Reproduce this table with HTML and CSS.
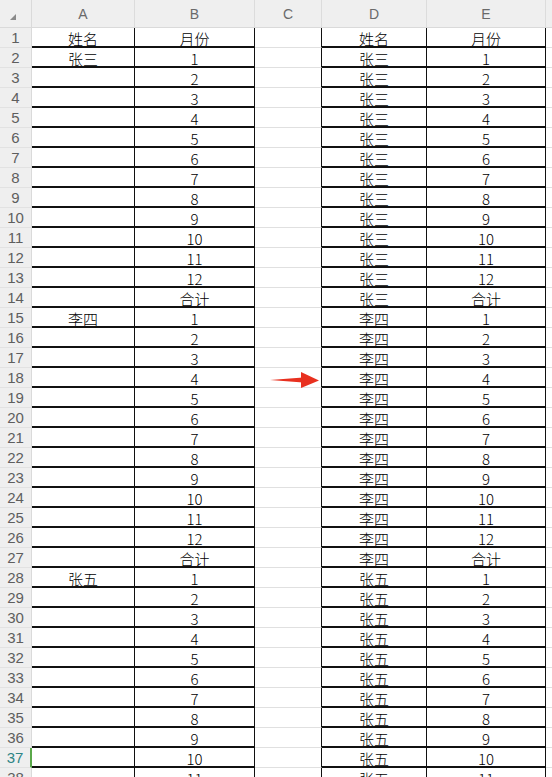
FILE: index.html
```html
<!DOCTYPE html>
<html lang="zh">
<head>
<meta charset="utf-8">
<link rel="stylesheet" href="styles.css">
</head>
<body>
<div class="sheet">
<div class="corner"><span class="tri"></span></div><div class="h">A</div><div class="h">B</div><div class="h">C</div><div class="h">D</div><div class="h">E</div><div class="h last"></div>
<div class="n">1</div><div class="t">姓名</div><div class="t">月份</div><div class="k"></div><div class="t">姓名</div><div class="t">月份</div><div class="g"></div>
<div class="n">2</div><div class="t">张三</div><div class="t">1</div><div class="k"></div><div class="t">张三</div><div class="t">1</div><div class="g"></div>
<div class="n">3</div><div class="t"></div><div class="t">2</div><div class="k"></div><div class="t">张三</div><div class="t">2</div><div class="g"></div>
<div class="n">4</div><div class="t"></div><div class="t">3</div><div class="k"></div><div class="t">张三</div><div class="t">3</div><div class="g"></div>
<div class="n">5</div><div class="t"></div><div class="t">4</div><div class="k"></div><div class="t">张三</div><div class="t">4</div><div class="g"></div>
<div class="n">6</div><div class="t"></div><div class="t">5</div><div class="k"></div><div class="t">张三</div><div class="t">5</div><div class="g"></div>
<div class="n">7</div><div class="t"></div><div class="t">6</div><div class="k"></div><div class="t">张三</div><div class="t">6</div><div class="g"></div>
<div class="n">8</div><div class="t"></div><div class="t">7</div><div class="k"></div><div class="t">张三</div><div class="t">7</div><div class="g"></div>
<div class="n">9</div><div class="t"></div><div class="t">8</div><div class="k"></div><div class="t">张三</div><div class="t">8</div><div class="g"></div>
<div class="n">10</div><div class="t"></div><div class="t">9</div><div class="k"></div><div class="t">张三</div><div class="t">9</div><div class="g"></div>
<div class="n">11</div><div class="t"></div><div class="t">10</div><div class="k"></div><div class="t">张三</div><div class="t">10</div><div class="g"></div>
<div class="n">12</div><div class="t"></div><div class="t">11</div><div class="k"></div><div class="t">张三</div><div class="t">11</div><div class="g"></div>
<div class="n">13</div><div class="t"></div><div class="t">12</div><div class="k"></div><div class="t">张三</div><div class="t">12</div><div class="g"></div>
<div class="n">14</div><div class="t"></div><div class="t">合计</div><div class="k"></div><div class="t">张三</div><div class="t">合计</div><div class="g"></div>
<div class="n">15</div><div class="t">李四</div><div class="t">1</div><div class="k"></div><div class="t">李四</div><div class="t">1</div><div class="g"></div>
<div class="n">16</div><div class="t"></div><div class="t">2</div><div class="k"></div><div class="t">李四</div><div class="t">2</div><div class="g"></div>
<div class="n">17</div><div class="t"></div><div class="t">3</div><div class="k"></div><div class="t">李四</div><div class="t">3</div><div class="g"></div>
<div class="n">18</div><div class="t"></div><div class="t">4</div><div class="k arrow-cell"><svg class="arrow" width="67" height="20" viewBox="0 0 67 20"><polygon points="15,12 48,9.6 48,14.4" fill="#e8301f"/><polygon points="46,4 64,12.5 46,20" fill="#e8301f"/></svg></div><div class="t">李四</div><div class="t">4</div><div class="g"></div>
<div class="n">19</div><div class="t"></div><div class="t">5</div><div class="k"></div><div class="t">李四</div><div class="t">5</div><div class="g"></div>
<div class="n">20</div><div class="t"></div><div class="t">6</div><div class="k"></div><div class="t">李四</div><div class="t">6</div><div class="g"></div>
<div class="n">21</div><div class="t"></div><div class="t">7</div><div class="k"></div><div class="t">李四</div><div class="t">7</div><div class="g"></div>
<div class="n">22</div><div class="t"></div><div class="t">8</div><div class="k"></div><div class="t">李四</div><div class="t">8</div><div class="g"></div>
<div class="n">23</div><div class="t"></div><div class="t">9</div><div class="k"></div><div class="t">李四</div><div class="t">9</div><div class="g"></div>
<div class="n">24</div><div class="t"></div><div class="t">10</div><div class="k"></div><div class="t">李四</div><div class="t">10</div><div class="g"></div>
<div class="n">25</div><div class="t"></div><div class="t">11</div><div class="k"></div><div class="t">李四</div><div class="t">11</div><div class="g"></div>
<div class="n">26</div><div class="t"></div><div class="t">12</div><div class="k"></div><div class="t">李四</div><div class="t">12</div><div class="g"></div>
<div class="n">27</div><div class="t"></div><div class="t">合计</div><div class="k"></div><div class="t">李四</div><div class="t">合计</div><div class="g"></div>
<div class="n">28</div><div class="t">张五</div><div class="t">1</div><div class="k"></div><div class="t">张五</div><div class="t">1</div><div class="g"></div>
<div class="n">29</div><div class="t"></div><div class="t">2</div><div class="k"></div><div class="t">张五</div><div class="t">2</div><div class="g"></div>
<div class="n">30</div><div class="t"></div><div class="t">3</div><div class="k"></div><div class="t">张五</div><div class="t">3</div><div class="g"></div>
<div class="n">31</div><div class="t"></div><div class="t">4</div><div class="k"></div><div class="t">张五</div><div class="t">4</div><div class="g"></div>
<div class="n">32</div><div class="t"></div><div class="t">5</div><div class="k"></div><div class="t">张五</div><div class="t">5</div><div class="g"></div>
<div class="n">33</div><div class="t"></div><div class="t">6</div><div class="k"></div><div class="t">张五</div><div class="t">6</div><div class="g"></div>
<div class="n">34</div><div class="t"></div><div class="t">7</div><div class="k"></div><div class="t">张五</div><div class="t">7</div><div class="g"></div>
<div class="n">35</div><div class="t"></div><div class="t">8</div><div class="k"></div><div class="t">张五</div><div class="t">8</div><div class="g"></div>
<div class="n">36</div><div class="t"></div><div class="t">9</div><div class="k"></div><div class="t">张五</div><div class="t">9</div><div class="g"></div>
<div class="n sel">37</div><div class="t"></div><div class="t">10</div><div class="k"></div><div class="t">张五</div><div class="t">10</div><div class="g"></div>
<div class="n">38</div><div class="t"></div><div class="t">11</div><div class="k"></div><div class="t">张五</div><div class="t">11</div><div class="g"></div>
</div>
</body>
</html>
```
FILE: styles.css
```css
html, body {
  margin: 0;
  padding: 0;
  background: #ffffff;
  overflow: hidden;
}

.sheet {
  display: grid;
  grid-template-columns: 32px 103px 120px 67px 105px 119px 1fr;
  grid-template-rows: 28px;
  grid-auto-rows: 20px;
  width: 552px;
  font-family: "Noto Sans CJK SC", "Noto Sans", sans-serif;
}

.sheet > div {
  box-sizing: border-box;
  overflow: hidden;
  white-space: nowrap;
}

.corner {
  background: #efefef;
  border-right: 1px solid #dadada;
  border-bottom: 1px solid #dadada;
  position: relative;
}

.tri {
  position: absolute;
  left: 10px;
  top: 14px;
  width: 0;
  height: 0;
  border-left: 6px solid transparent;
  border-bottom: 6px solid #8a8a8a;
}

.h {
  background: #efefef;
  border-right: 1px solid #dcdcdc;
  border-bottom: 1px solid #dadada;
  color: #6a6a6a;
  font-family: "Liberation Sans", Arial, sans-serif;
  font-size: 14px;
  line-height: 28px;
  text-align: center;
}

.h.last {
  border-right: none;
}

.n {
  background: #efefef;
  border-right: 1px solid #dadada;
  border-bottom: 1px solid #e2e2e2;
  color: #5e5e5e;
  font-family: "Liberation Sans", Arial, sans-serif;
  font-size: 15px;
  line-height: 20px;
  text-align: center;
}

.n.sel {
  color: #2e8585;
  border-right: 2px solid #5aa84a;
}

.t, .k, .g {
  font-size: 15px;
  line-height: 21px;
  text-align: center;
  color: #000;
  font-weight: 300;
}

.t {
  border-right: 1px solid #111;
  border-bottom: 2px solid #111;
}

.k {
  border-right: 1px solid #111;
  border-bottom: 1px solid #e0e0e0;
}

.g {
  border-bottom: 1px solid #e0e0e0;
}

.arrow-cell {
  position: relative;
  overflow: visible !important;
}

.arrow {
  position: absolute;
  left: 0;
  top: 0;
}
```
